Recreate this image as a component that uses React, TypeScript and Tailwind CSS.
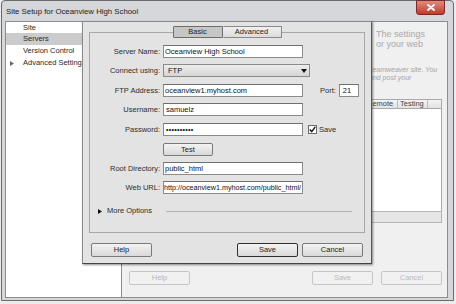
import React from "react";

type Cls = { className?: string; children?: React.ReactNode };

function TextBox({ className = "", children }: Cls) {
  return (
    <div
      className={`h-[13px] bg-white border border-[#8a8a8a] border-t-[#6f6f6f] flex items-center pl-[2px] overflow-hidden whitespace-nowrap text-[#111] ${className}`}
    >
      {children}
    </div>
  );
}

function Row({ label, className = "", children }: Cls & { label: string }) {
  return (
    <div className={`flex items-center h-[13px] ${className}`}>
      <div className="w-[70px] text-right whitespace-nowrap text-[#2b2b2b]">{label}</div>
      <div className="ml-[3px] flex items-center">{children}</div>
    </div>
  );
}

function Btn({ className = "", children }: Cls) {
  return (
    <div
      className={`h-[14px] w-[61px] flex items-center justify-center border rounded-[2px] bg-gradient-to-b from-[#f3f3f3] to-[#d9d9d9] text-[#222] ${className}`}
    >
      {children}
    </div>
  );
}

function DisBtn({ className = "", children }: Cls) {
  return (
    <div
      className={`h-[14px] w-[61px] flex items-center justify-center border border-[#c6c6c6] rounded-[2px] bg-[#f1f1f1] text-[#b9b9b9] ${className}`}
    >
      {children}
    </div>
  );
}

export default function App() {
  return (
    <div className="w-[456px] h-[304px] relative overflow-hidden bg-[#ececec] font-['Liberation_Sans',Arial,sans-serif] text-[7.5px] leading-none">
      {/* Background window */}
      <div className="ml-[1px] w-[453px] h-[301px] flex flex-col border border-[#6a6a6a] bg-[#d5d7da] rounded-t-[4px]">
        {/* Title bar */}
        <div className="h-[20px] flex items-center justify-between pl-[4px] pr-[8px]">
          <span className="text-[7.8px] text-[#1b1b1b] whitespace-nowrap mt-[2px]">
            Site Setup for Oceanview High School
          </span>
          <div className="self-start -mt-[1px] w-[29px] h-[15px] rounded-b-[3px] border border-[#7a2a2a] bg-gradient-to-b from-[#e08a80] to-[#c0392b] flex items-center justify-center">
            <svg width="8" height="7" viewBox="0 0 8 7">
              <path d="M1 1 L7 6 M7 1 L1 6" stroke="#fff" strokeWidth="1.8" strokeLinecap="round" />
            </svg>
          </div>
        </div>
        {/* Body */}
        <div className="flex-1 flex pl-[3px] pr-[5px] pb-[2px]">
          {/* Sidebar */}
          <div className="w-[116px] bg-white border-l border-t border-b border-[#8d8d8d] flex flex-col text-[#2a2a2a]">
            <div className="h-[11px] flex items-center pl-[17px]">Site</div>
            <div className="h-[12px] flex items-center pl-[17px] bg-[#cbcbcb]">Servers</div>
            <div className="h-[12px] flex items-center pl-[17px]">Version Control</div>
            <div className="h-[12px] flex items-center pl-[4px] whitespace-nowrap">
              <svg width="4" height="5" viewBox="0 0 4 5" className="mr-[9px]">
                <path d="M0 0 L4 2.5 L0 5 Z" fill="#6a6a6a" />
              </svg>
              Advanced Settings
            </div>
          </div>
          {/* Right panel */}
          <div className="flex-1 bg-[#f0f0f0] border border-[#8d8d8d] flex flex-col">
            <div className="pl-[254px] pt-[7px] text-[9px] leading-[10px] text-[#a9a9a9] whitespace-nowrap">
              <div>The settings</div>
              <div>or your web</div>
            </div>
            <div className="pl-[243px] mt-[17px] text-[7px] leading-[8px] italic text-[#a5a5a5] whitespace-nowrap">
              <div>Dreamweaver site. You</div>
              <div className="pl-[4px]">and post your</div>
            </div>
            {/* Table */}
            <div className="ml-[18px] mr-[5px] mt-[17px] flex flex-col">
              <div className="h-[10px] bg-gradient-to-b from-[#f4f4f4] to-[#e2e2e2] border border-[#a9a9a9] flex justify-end text-[#444]">
                <div className="w-[36px] border-r border-[#bdbdbd] pl-[5px] flex items-center">Remote</div>
                <div className="w-[30px] border-r border-[#bdbdbd] pl-[2px] flex items-center">Testing</div>
                <div className="w-[13px]" />
              </div>
              <div className="h-[102px] bg-white border-l border-r border-[#a9a9a9]" />
              <div className="h-[12px] bg-[#e6e6e6] border border-[#b5b5b5]" />
            </div>
            <div className="mt-auto mb-[12px] flex items-center pl-[7px]">
              <DisBtn>Help</DisBtn>
              <DisBtn className="ml-auto">Save</DisBtn>
              <DisBtn className="ml-[8px] mr-[5px]">Cancel</DisBtn>
            </div>
          </div>
        </div>
      </div>

      {/* Overlaid dialog */}
      <div className="absolute left-[82px] top-[21px] w-[290px] h-[243px] bg-[#e3e3e3] border border-[#8a8a8a] border-r-[#555] border-b-[#444] shadow-[1px_1px_2px_rgba(0,0,0,0.45)] flex flex-col">
        {/* Group box */}
        <div className="mx-[6px] mt-[10px] h-[201px] border border-[#a8a8a8] flex flex-col">
          <div className="flex justify-center -mt-[7px]">
            <div className="h-[12px] w-[50px] flex items-center justify-center border border-[#6d6d6d] bg-[#c6c6c6] text-[#222] rounded-[1px]">
              Basic
            </div>
            <div className="h-[12px] w-[59px] flex items-center justify-center border border-l-0 border-[#8a8a8a] bg-gradient-to-b from-[#f1f1f1] to-[#dcdcdc] text-[#222] rounded-[1px]">
              Advanced
            </div>
          </div>

          <Row label="Server Name:" className="mt-[7px]">
            <TextBox className="w-[140px]">
              <span className="-ml-[1px]">Oceanview High School</span>
            </TextBox>
          </Row>
          <Row label="Connect using:" className="mt-[6px]">
            <div className="h-[13px] w-[147px] border border-[#8a8a8a] bg-gradient-to-b from-[#ededed] to-[#d6d6d6] flex items-center pl-[4px] text-[#111]">
              <span>FTP</span>
              <svg width="6" height="4" viewBox="0 0 6 4" className="ml-auto mr-[2px]">
                <path d="M0 0 L6 0 L3 4 Z" fill="#111" />
              </svg>
            </div>
          </Row>
          <Row label="FTP Address:" className="mt-[7px]">
            <TextBox className="w-[140px]">
              <span className="-ml-[1px]">oceanview1.myhost.com</span>
            </TextBox>
            <span className="ml-[17px] text-[#2b2b2b]">Port:</span>
            <TextBox className="ml-[3px] w-[20px]">
              <span className="pl-[1px]">21</span>
            </TextBox>
          </Row>
          <Row label="Username:" className="mt-[6px]">
            <TextBox className="w-[140px]">samuelz</TextBox>
          </Row>
          <Row label="Password:" className="mt-[7px]">
            <TextBox className="w-[140px]">
              <span className="text-[7px] tracking-[0.3px] font-bold">••••••••••</span>
            </TextBox>
            <div className="ml-[5px] w-[9px] h-[9px] bg-white border border-[#6a6a6a] flex items-center justify-center">
              <svg width="7" height="7" viewBox="0 0 7 7">
                <path d="M0.8 3.6 L2.7 5.6 L6.3 0.9" stroke="#111" strokeWidth="1.4" fill="none" />
              </svg>
            </div>
            <span className="ml-[2px] text-[#2b2b2b]">Save</span>
          </Row>
          <Row label="" className="mt-[7px]">
            <div className="h-[13px] w-[50px] flex items-center justify-center border border-[#7a7a7a] rounded-[2px] bg-gradient-to-b from-[#f3f3f3] to-[#d9d9d9] text-[#222]">
              Test
            </div>
          </Row>
          <Row label="Root Directory:" className="mt-[6px]">
            <TextBox className="w-[140px]">
              <span className="-ml-[1px]">public_html</span>
            </TextBox>
          </Row>
          <Row label="Web URL:" className="mt-[6px]">
            <TextBox className="w-[140px] justify-end pr-[1px]">
              <span className="text-[7.2px]">http://oceanview1.myhost.com/public_html/</span>
            </TextBox>
          </Row>
          <div className="mt-[12px] h-[10px] flex items-center pl-[8px] pr-[12px]">
            <svg width="4" height="5" viewBox="0 0 4 5">
              <path d="M0 0 L4 2.5 L0 5 Z" fill="#111" />
            </svg>
            <span className="ml-[5px] text-[#2b2b2b] whitespace-nowrap">More Options</span>
            <div className="ml-[14px] flex-1 h-px bg-[#b3b3b3]" />
          </div>
        </div>
        {/* Buttons */}
        <div className="mt-[10px] flex items-center px-[8px]">
          <Btn className="border-[#7a7a7a]">Help</Btn>
          <Btn className="ml-auto border-[#2f2f2f]">Save</Btn>
          <Btn className="ml-[4px] border-[#7a7a7a]">Cancel</Btn>
        </div>
      </div>
    </div>
  );
}
